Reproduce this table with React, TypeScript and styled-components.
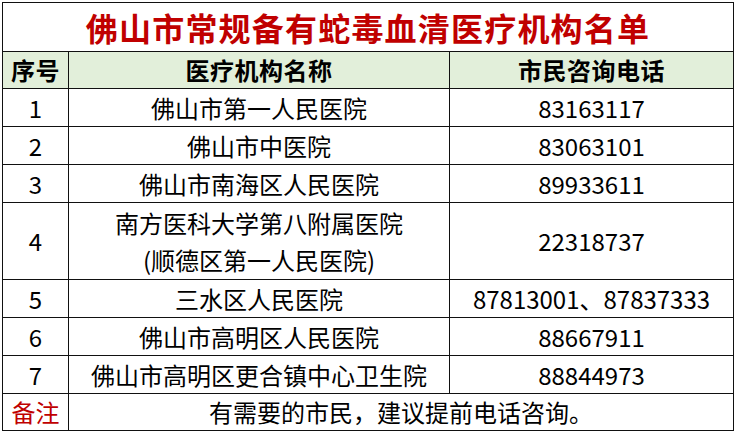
import React from 'react';
import styled, { createGlobalStyle } from 'styled-components';

interface Hospital {
  no: number;
  name: string[];
  phone: string;
}

const hospitals: Hospital[] = [
  { no: 1, name: ['佛山市第一人民医院'], phone: '83163117' },
  { no: 2, name: ['佛山市中医院'], phone: '83063101' },
  { no: 3, name: ['佛山市南海区人民医院'], phone: '89933611' },
  { no: 4, name: ['南方医科大学第八附属医院', '(顺德区第一人民医院)'], phone: '22318737' },
  { no: 5, name: ['三水区人民医院'], phone: '87813001、87837333' },
  { no: 6, name: ['佛山市高明区人民医院'], phone: '88667911' },
  { no: 7, name: ['佛山市高明区更合镇中心卫生院'], phone: '88844973' },
];

const GlobalStyle = createGlobalStyle`
  html, body {
    margin: 0;
    padding: 0;
    background: #ffffff;
  }
  body {
    font-family: "Noto Sans CJK SC", "Noto Sans", sans-serif;
    color: #000;
  }
`;

const Page = styled.div`
  padding: 2px 1px 0 2px;
`;

const Table = styled.table`
  width: 731px;
  border-collapse: collapse;
  table-layout: fixed;
`;

const Cell = styled.td<{ $h?: number }>`
  border: 1.6px solid #111;
  padding: 0;
  height: ${({ $h }) => $h ?? 37}px;
  box-sizing: border-box;
  text-align: center;
  vertical-align: middle;
  font-size: 24px;
  line-height: 28px;
  white-space: nowrap;
`;

const TitleCell = styled(Cell)`
  color: #c00000;
  font-weight: 700;
  font-size: 32px;
  letter-spacing: 1.2px;
  line-height: 36px;
`;

const HeadCell = styled(Cell)`
  background: #e2efda;
  font-weight: 700;
  letter-spacing: 0.5px;
`;

const NoteLabel = styled(Cell)`
  color: #c00000;
`;

const Line = styled.div`
  line-height: 37px;
`;

export default function App() {
  return (
    <Page>
      <GlobalStyle />
      <Table>
        <colgroup>
          <col style={{ width: 66 }} />
          <col style={{ width: 381 }} />
          <col style={{ width: 284 }} />
        </colgroup>
        <tbody>
          <tr>
            <TitleCell colSpan={3} $h={49}>佛山市常规备有蛇毒血清医疗机构名单</TitleCell>
          </tr>
          <tr>
            <HeadCell>序号</HeadCell>
            <HeadCell>医疗机构名称</HeadCell>
            <HeadCell>市民咨询电话</HeadCell>
          </tr>
          {hospitals.map((h) => {
            const height = h.name.length > 1 ? 77 : h.no === 7 ? 37 : 38;
            return (
              <tr key={h.no}>
                <Cell $h={height}>{h.no}</Cell>
                <Cell $h={height}>
                  {h.name.map((line) => (
                    <Line key={line}>{line}</Line>
                  ))}
                </Cell>
                <Cell $h={height}>{h.phone}</Cell>
              </tr>
            );
          })}
          <tr>
            <NoteLabel>备注</NoteLabel>
            <Cell colSpan={2}>有需要的市民，建议提前电话咨询。</Cell>
          </tr>
        </tbody>
      </Table>
    </Page>
  );
}
